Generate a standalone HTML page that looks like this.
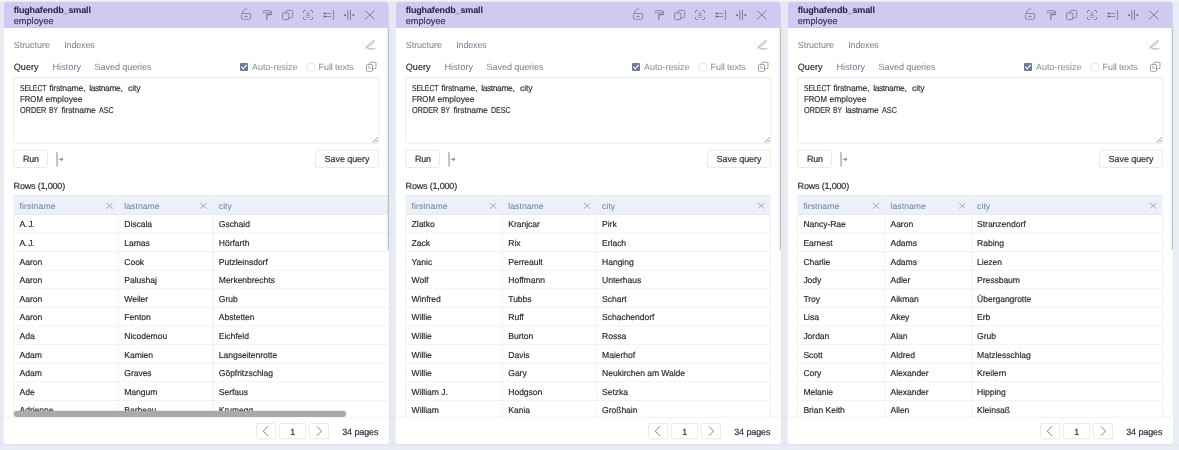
<!DOCTYPE html>
<html lang="en"><head><meta charset="utf-8"><title>Adminer</title><style>
html,body{margin:0;padding:0}
body{width:1179px;height:450px;overflow:hidden;background:#e5e9f2;font-family:"Liberation Sans",sans-serif;position:relative}
svg.l{position:absolute;left:0;top:0}
.tx{position:absolute;left:0;top:0;width:1179px;height:450px;overflow:hidden;will-change:transform}
.t{position:absolute;line-height:12px;white-space:nowrap;text-rendering:geometricPrecision;-webkit-text-stroke:0.18px}
</style></head><body>
<svg class="l" width="1179" height="450" viewBox="0 0 1179 450" fill="none">
<rect x="0" y="0" width="1179" height="1.6" fill="#f1f3f9"/>
<rect x="0" y="444" width="1179" height="6" fill="#e8ecf6"/>
<rect x="1173" y="1.6" width="6" height="442.4" fill="#e9edf6"/>
<path d="M0 444.9L1179 444.9" stroke="#e2e5ee" stroke-width="1.4"/>
<rect x="3.8" y="1.7" width="385" height="442.3" rx="4" fill="#fff"/>
<path d="M3.8 27.9V5.7a4 4 0 0 1 4-4H384.8a4 4 0 0 1 4 4V27.9Z" fill="#d0caf2"/>
<path d="M3.8 27.5L388.8 27.5" stroke="#c9c4e8" stroke-width="0.7"/>
<rect x="241.5" y="13.5" width="9.2" height="5.7" rx="1" fill="none" stroke="#7d77a6" stroke-width="0.85"/>
<path transform="translate(240 8)" d="M2.85 5.5V3.9C2.85 2.3 4.0 1.15 5.7 1.0L6.9 0.85" fill="none" stroke="#7d77a6" stroke-width="0.85" stroke-linecap="round" stroke-linejoin="round"/>
<path d="M244.7 16.4L247.3 16.4" stroke="#7d77a6" stroke-width="0.9" stroke-linecap="round"/>
<rect x="262.9" y="10.5" width="7.6" height="2.3" rx="0.9" fill="none" stroke="#7d77a6" stroke-width="0.85"/>
<path transform="translate(261 8)" d="M9.6 3.65H10.15V6.6H5.85V11.5" fill="none" stroke="#7d77a6" stroke-width="1.2" stroke-linecap="round" stroke-linejoin="round"/>
<path transform="translate(281 8)" d="M5.2 4.8V3.3C5.2 2.8 5.6 2.4 6.1 2.4H10.8C11.3 2.4 11.7 2.8 11.7 3.3V8.6C11.7 9.1 11.3 9.5 10.8 9.5H7.9" fill="none" stroke="#7d77a6" stroke-width="0.85" />
<rect x="282.5" y="13" width="6.4" height="6.6" rx="0.9" fill="none" stroke="#7d77a6" stroke-width="0.85"/>
<path transform="translate(0 0)" d="M303.5 12.8V11.1Q303.5 10.5 304.1 10.5H305.8 M310.3 10.5H312Q312.6 10.5 312.6 11.1V12.8 M312.6 17.2V18.9Q312.6 19.5 312 19.5H310.3 M305.8 19.5H304.1Q303.5 19.5 303.5 18.9V17.2" fill="none" stroke="#7d77a6" stroke-width="0.95" />
<circle cx="308.05" cy="13.6" r="1.15" fill="none" stroke="#7d77a6" stroke-width="0.8" opacity="0.7"/>
<ellipse cx="308.05" cy="16.5" rx="2.3" ry="1.25" fill="none" stroke="#7d77a6" stroke-width="0.8" opacity="0.7"/>
<path d="M324.6 13.4L331.2 13.4" stroke="#7d77a6" stroke-width="0.85"/>
<path d="M324.6 16.5L331.2 16.5" stroke="#7d77a6" stroke-width="0.85"/>
<path d="M333.4 10.3L333.4 19.7" stroke="#7d77a6" stroke-width="0.85" stroke-linecap="round"/>
<circle cx="324.6" cy="13.4" r="0.95" fill="#5d578c"/>
<circle cx="324.6" cy="16.5" r="0.95" fill="#5d578c"/>
<path d="M347.85 10.3L347.85 19.7" stroke="#7d77a6" stroke-width="1" stroke-linecap="round"/>
<path d="M350.45 10.3L350.45 19.7" stroke="#7d77a6" stroke-width="1" stroke-linecap="round"/>
<circle cx="345.1" cy="15.2" r="0.95" fill="#5d578c"/>
<circle cx="353.45" cy="15.2" r="0.95" fill="#5d578c"/>
<path transform="translate(0 0)" d="M365.3 10.5L374.3 19.2M374.3 10.5L365.3 19.2" fill="none" stroke="#746ea0" stroke-width="0.88" stroke-linecap="round" stroke-linejoin="round"/>
<path transform="translate(361 38)" d="M5.1 9.9L5.8 8.1L12.3 2.75Q12.9 2.35 13.35 2.9Q13.8 3.5 13.25 3.95L6.8 9.4Z" fill="none" stroke="#a3a3a8" stroke-width="0.85" stroke-linecap="round" stroke-linejoin="round"/>
<path d="M368.2 48.9L375 48.9" stroke="#a3a3a8" stroke-width="0.9" stroke-linecap="round"/>
<rect x="240" y="63" width="8" height="8" rx="1" fill="#6f7b96"/>
<path transform="translate(240 63)" d="M1.7 4.2L3.3 5.8L6.4 2.1" fill="none" stroke="#fff" stroke-width="1.1" stroke-linecap="round" stroke-linejoin="round"/>
<rect x="307.3" y="63.3" width="7.1" height="7.4" rx="1" fill="#fff" stroke="#dcdce0" stroke-width="0.67"/>
<path transform="translate(365 61)" d="M4.6 3.4V2.2C4.6 1.7 5 1.3 5.5 1.3H10.1C10.6 1.3 11 1.7 11 2.2V6.8C11 7.3 10.6 7.7 10.1 7.7H7.6" fill="none" stroke="#8e8e93" stroke-width="0.85" />
<rect x="366.5" y="64.5" width="6" height="6.8" rx="0.8" fill="none" stroke="#8e8e93" stroke-width="0.85"/>
<path transform="translate(365 61)" d="M3 7.2H6M3 5.6H4.6" fill="none" stroke="#8e8e93" stroke-width="0.7" />
<rect x="13.7" y="77.6" width="365" height="65.6" rx="1.5" fill="#fff" stroke="#e0e0e4" stroke-width="0.67"/>
<path transform="translate(371 135.8)" d="M1.5 6.8L6.8 1.5M4.3 6.8L6.8 4.3" fill="none" stroke="#6f6f6f" stroke-width="0.7" />
<rect x="13.7" y="150.2" width="33.8" height="17.3" rx="1.6" fill="#fff" stroke="#e0e0e4" stroke-width="0.67"/>
<rect x="56.2" y="152.2" width="1.6" height="14.3" fill="#b4b4b6"/>
<path transform="translate(58.6 156.8)" d="M0.6 2.5H4M2.8 1.1L4.3 2.5L2.8 3.9" fill="none" stroke="#555" stroke-width="0.7" stroke-linecap="round" stroke-linejoin="round"/>
<rect x="315.5" y="150.2" width="63.1" height="17.3" rx="1.6" fill="#fff" stroke="#e0e0e4" stroke-width="0.67"/>
<rect x="13.6" y="195.4" width="375.2" height="19.3" fill="#ecf0f8"/>
<path d="M13.6 195.5L388.8 195.5" stroke="#e5e8ee" stroke-width="0.9"/>
<path d="M13.6 214.2L388.8 214.2" stroke="#e5e8ee" stroke-width="0.9"/>
<path d="M13.6 233L388.8 233" stroke="#e9ebee" stroke-width="0.67"/>
<path d="M13.6 251.6L388.8 251.6" stroke="#e9ebee" stroke-width="0.67"/>
<path d="M13.6 270.2L388.8 270.2" stroke="#e9ebee" stroke-width="0.67"/>
<path d="M13.6 288.8L388.8 288.8" stroke="#e9ebee" stroke-width="0.67"/>
<path d="M13.6 307.4L388.8 307.4" stroke="#e9ebee" stroke-width="0.67"/>
<path d="M13.6 326L388.8 326" stroke="#e9ebee" stroke-width="0.67"/>
<path d="M13.6 344.6L388.8 344.6" stroke="#e9ebee" stroke-width="0.67"/>
<path d="M13.6 363.2L388.8 363.2" stroke="#e9ebee" stroke-width="0.67"/>
<path d="M13.6 381.8L388.8 381.8" stroke="#e9ebee" stroke-width="0.67"/>
<path d="M13.6 400.4L388.8 400.4" stroke="#e9ebee" stroke-width="0.67"/>
<path d="M13.6 214.4L13.6 417.2" stroke="#e9ebee" stroke-width="0.67"/>
<path d="M118.3 214.4L118.3 417.2" stroke="#e9ebee" stroke-width="0.67"/>
<path d="M213.3 214.4L213.3 417.2" stroke="#e9ebee" stroke-width="0.67"/>
<path d="M118.3 195.4L118.3 214.7" stroke="#f3f5fa" stroke-width="0.67"/>
<path d="M213.3 195.4L213.3 214.7" stroke="#f3f5fa" stroke-width="0.67"/>
<path transform="translate(106.2 202.9)" d="M0.4 0.4L6.1 5.4M6.1 0.4L0.4 5.4" fill="none" stroke="#868c98" stroke-width="0.7" stroke-linecap="round"/>
<path transform="translate(200.2 202.9)" d="M0.4 0.4L6.1 5.4M6.1 0.4L0.4 5.4" fill="none" stroke="#868c98" stroke-width="0.7" stroke-linecap="round"/>
<rect x="395.8" y="1.7" width="385" height="442.3" rx="4" fill="#fff"/>
<path d="M395.8 27.9V5.7a4 4 0 0 1 4-4H776.8a4 4 0 0 1 4 4V27.9Z" fill="#d0caf2"/>
<path d="M395.8 27.5L780.8 27.5" stroke="#c9c4e8" stroke-width="0.7"/>
<rect x="633.5" y="13.5" width="9.2" height="5.7" rx="1" fill="none" stroke="#7d77a6" stroke-width="0.85"/>
<path transform="translate(632 8)" d="M2.85 5.5V3.9C2.85 2.3 4.0 1.15 5.7 1.0L6.9 0.85" fill="none" stroke="#7d77a6" stroke-width="0.85" stroke-linecap="round" stroke-linejoin="round"/>
<path d="M636.7 16.4L639.3 16.4" stroke="#7d77a6" stroke-width="0.9" stroke-linecap="round"/>
<rect x="654.9" y="10.5" width="7.6" height="2.3" rx="0.9" fill="none" stroke="#7d77a6" stroke-width="0.85"/>
<path transform="translate(653 8)" d="M9.6 3.65H10.15V6.6H5.85V11.5" fill="none" stroke="#7d77a6" stroke-width="1.2" stroke-linecap="round" stroke-linejoin="round"/>
<path transform="translate(673 8)" d="M5.2 4.8V3.3C5.2 2.8 5.6 2.4 6.1 2.4H10.8C11.3 2.4 11.7 2.8 11.7 3.3V8.6C11.7 9.1 11.3 9.5 10.8 9.5H7.9" fill="none" stroke="#7d77a6" stroke-width="0.85" />
<rect x="674.5" y="13" width="6.4" height="6.6" rx="0.9" fill="none" stroke="#7d77a6" stroke-width="0.85"/>
<path transform="translate(0 0)" d="M695.5 12.8V11.1Q695.5 10.5 696.1 10.5H697.8 M702.3 10.5H704Q704.6 10.5 704.6 11.1V12.8 M704.6 17.2V18.9Q704.6 19.5 704 19.5H702.3 M697.8 19.5H696.1Q695.5 19.5 695.5 18.9V17.2" fill="none" stroke="#7d77a6" stroke-width="0.95" />
<circle cx="700.05" cy="13.6" r="1.15" fill="none" stroke="#7d77a6" stroke-width="0.8" opacity="0.7"/>
<ellipse cx="700.05" cy="16.5" rx="2.3" ry="1.25" fill="none" stroke="#7d77a6" stroke-width="0.8" opacity="0.7"/>
<path d="M716.6 13.4L723.2 13.4" stroke="#7d77a6" stroke-width="0.85"/>
<path d="M716.6 16.5L723.2 16.5" stroke="#7d77a6" stroke-width="0.85"/>
<path d="M725.4 10.3L725.4 19.7" stroke="#7d77a6" stroke-width="0.85" stroke-linecap="round"/>
<circle cx="716.6" cy="13.4" r="0.95" fill="#5d578c"/>
<circle cx="716.6" cy="16.5" r="0.95" fill="#5d578c"/>
<path d="M739.85 10.3L739.85 19.7" stroke="#7d77a6" stroke-width="1" stroke-linecap="round"/>
<path d="M742.45 10.3L742.45 19.7" stroke="#7d77a6" stroke-width="1" stroke-linecap="round"/>
<circle cx="737.1" cy="15.2" r="0.95" fill="#5d578c"/>
<circle cx="745.45" cy="15.2" r="0.95" fill="#5d578c"/>
<path transform="translate(0 0)" d="M757.3 10.5L766.3 19.2M766.3 10.5L757.3 19.2" fill="none" stroke="#746ea0" stroke-width="0.88" stroke-linecap="round" stroke-linejoin="round"/>
<path transform="translate(753 38)" d="M5.1 9.9L5.8 8.1L12.3 2.75Q12.9 2.35 13.35 2.9Q13.8 3.5 13.25 3.95L6.8 9.4Z" fill="none" stroke="#a3a3a8" stroke-width="0.85" stroke-linecap="round" stroke-linejoin="round"/>
<path d="M760.2 48.9L767 48.9" stroke="#a3a3a8" stroke-width="0.9" stroke-linecap="round"/>
<rect x="632" y="63" width="8" height="8" rx="1" fill="#6f7b96"/>
<path transform="translate(632 63)" d="M1.7 4.2L3.3 5.8L6.4 2.1" fill="none" stroke="#fff" stroke-width="1.1" stroke-linecap="round" stroke-linejoin="round"/>
<rect x="699.3" y="63.3" width="7.1" height="7.4" rx="1" fill="#fff" stroke="#dcdce0" stroke-width="0.67"/>
<path transform="translate(757 61)" d="M4.6 3.4V2.2C4.6 1.7 5 1.3 5.5 1.3H10.1C10.6 1.3 11 1.7 11 2.2V6.8C11 7.3 10.6 7.7 10.1 7.7H7.6" fill="none" stroke="#8e8e93" stroke-width="0.85" />
<rect x="758.5" y="64.5" width="6" height="6.8" rx="0.8" fill="none" stroke="#8e8e93" stroke-width="0.85"/>
<path transform="translate(757 61)" d="M3 7.2H6M3 5.6H4.6" fill="none" stroke="#8e8e93" stroke-width="0.7" />
<rect x="405.7" y="77.6" width="365" height="65.6" rx="1.5" fill="#fff" stroke="#e0e0e4" stroke-width="0.67"/>
<path transform="translate(763 135.8)" d="M1.5 6.8L6.8 1.5M4.3 6.8L6.8 4.3" fill="none" stroke="#6f6f6f" stroke-width="0.7" />
<rect x="405.7" y="150.2" width="33.8" height="17.3" rx="1.6" fill="#fff" stroke="#e0e0e4" stroke-width="0.67"/>
<rect x="448.2" y="152.2" width="1.6" height="14.3" fill="#b4b4b6"/>
<path transform="translate(450.6 156.8)" d="M0.6 2.5H4M2.8 1.1L4.3 2.5L2.8 3.9" fill="none" stroke="#555" stroke-width="0.7" stroke-linecap="round" stroke-linejoin="round"/>
<rect x="707.5" y="150.2" width="63.1" height="17.3" rx="1.6" fill="#fff" stroke="#e0e0e4" stroke-width="0.67"/>
<rect x="405.6" y="195.4" width="364.8" height="19.3" fill="#ecf0f8"/>
<path d="M405.6 195.5L770.4 195.5" stroke="#e5e8ee" stroke-width="0.9"/>
<path d="M405.6 214.2L770.4 214.2" stroke="#e5e8ee" stroke-width="0.9"/>
<path d="M405.6 233L770.4 233" stroke="#e9ebee" stroke-width="0.67"/>
<path d="M405.6 251.6L770.4 251.6" stroke="#e9ebee" stroke-width="0.67"/>
<path d="M405.6 270.2L770.4 270.2" stroke="#e9ebee" stroke-width="0.67"/>
<path d="M405.6 288.8L770.4 288.8" stroke="#e9ebee" stroke-width="0.67"/>
<path d="M405.6 307.4L770.4 307.4" stroke="#e9ebee" stroke-width="0.67"/>
<path d="M405.6 326L770.4 326" stroke="#e9ebee" stroke-width="0.67"/>
<path d="M405.6 344.6L770.4 344.6" stroke="#e9ebee" stroke-width="0.67"/>
<path d="M405.6 363.2L770.4 363.2" stroke="#e9ebee" stroke-width="0.67"/>
<path d="M405.6 381.8L770.4 381.8" stroke="#e9ebee" stroke-width="0.67"/>
<path d="M405.6 400.4L770.4 400.4" stroke="#e9ebee" stroke-width="0.67"/>
<path d="M405.6 214.4L405.6 417.2" stroke="#e9ebee" stroke-width="0.67"/>
<path d="M502.3 214.4L502.3 417.2" stroke="#e9ebee" stroke-width="0.67"/>
<path d="M596.6 214.4L596.6 417.2" stroke="#e9ebee" stroke-width="0.67"/>
<path d="M770.4 214.4L770.4 417.2" stroke="#e9ebee" stroke-width="0.67"/>
<path d="M502.3 195.4L502.3 214.7" stroke="#f3f5fa" stroke-width="0.67"/>
<path d="M596.6 195.4L596.6 214.7" stroke="#f3f5fa" stroke-width="0.67"/>
<path transform="translate(489.9 202.9)" d="M0.4 0.4L6.1 5.4M6.1 0.4L0.4 5.4" fill="none" stroke="#868c98" stroke-width="0.7" stroke-linecap="round"/>
<path transform="translate(583.9 202.9)" d="M0.4 0.4L6.1 5.4M6.1 0.4L0.4 5.4" fill="none" stroke="#868c98" stroke-width="0.7" stroke-linecap="round"/>
<path transform="translate(757.9 202.9)" d="M0.4 0.4L6.1 5.4M6.1 0.4L0.4 5.4" fill="none" stroke="#868c98" stroke-width="0.7" stroke-linecap="round"/>
<rect x="787.8" y="1.7" width="385" height="442.3" rx="4" fill="#fff"/>
<path d="M787.8 27.9V5.7a4 4 0 0 1 4-4H1168.8a4 4 0 0 1 4 4V27.9Z" fill="#d0caf2"/>
<path d="M787.8 27.5L1172.8 27.5" stroke="#c9c4e8" stroke-width="0.7"/>
<rect x="1025.5" y="13.5" width="9.2" height="5.7" rx="1" fill="none" stroke="#7d77a6" stroke-width="0.85"/>
<path transform="translate(1024 8)" d="M2.85 5.5V3.9C2.85 2.3 4.0 1.15 5.7 1.0L6.9 0.85" fill="none" stroke="#7d77a6" stroke-width="0.85" stroke-linecap="round" stroke-linejoin="round"/>
<path d="M1028.7 16.4L1031.3 16.4" stroke="#7d77a6" stroke-width="0.9" stroke-linecap="round"/>
<rect x="1046.9" y="10.5" width="7.6" height="2.3" rx="0.9" fill="none" stroke="#7d77a6" stroke-width="0.85"/>
<path transform="translate(1045 8)" d="M9.6 3.65H10.15V6.6H5.85V11.5" fill="none" stroke="#7d77a6" stroke-width="1.2" stroke-linecap="round" stroke-linejoin="round"/>
<path transform="translate(1065 8)" d="M5.2 4.8V3.3C5.2 2.8 5.6 2.4 6.1 2.4H10.8C11.3 2.4 11.7 2.8 11.7 3.3V8.6C11.7 9.1 11.3 9.5 10.8 9.5H7.9" fill="none" stroke="#7d77a6" stroke-width="0.85" />
<rect x="1066.5" y="13" width="6.4" height="6.6" rx="0.9" fill="none" stroke="#7d77a6" stroke-width="0.85"/>
<path transform="translate(0 0)" d="M1087.5 12.8V11.1Q1087.5 10.5 1088.1 10.5H1089.8 M1094.3 10.5H1096Q1096.6 10.5 1096.6 11.1V12.8 M1096.6 17.2V18.9Q1096.6 19.5 1096 19.5H1094.3 M1089.8 19.5H1088.1Q1087.5 19.5 1087.5 18.9V17.2" fill="none" stroke="#7d77a6" stroke-width="0.95" />
<circle cx="1092.05" cy="13.6" r="1.15" fill="none" stroke="#7d77a6" stroke-width="0.8" opacity="0.7"/>
<ellipse cx="1092.05" cy="16.5" rx="2.3" ry="1.25" fill="none" stroke="#7d77a6" stroke-width="0.8" opacity="0.7"/>
<path d="M1108.6 13.4L1115.2 13.4" stroke="#7d77a6" stroke-width="0.85"/>
<path d="M1108.6 16.5L1115.2 16.5" stroke="#7d77a6" stroke-width="0.85"/>
<path d="M1117.4 10.3L1117.4 19.7" stroke="#7d77a6" stroke-width="0.85" stroke-linecap="round"/>
<circle cx="1108.6" cy="13.4" r="0.95" fill="#5d578c"/>
<circle cx="1108.6" cy="16.5" r="0.95" fill="#5d578c"/>
<path d="M1131.85 10.3L1131.85 19.7" stroke="#7d77a6" stroke-width="1" stroke-linecap="round"/>
<path d="M1134.45 10.3L1134.45 19.7" stroke="#7d77a6" stroke-width="1" stroke-linecap="round"/>
<circle cx="1129.1" cy="15.2" r="0.95" fill="#5d578c"/>
<circle cx="1137.45" cy="15.2" r="0.95" fill="#5d578c"/>
<path transform="translate(0 0)" d="M1149.3 10.5L1158.3 19.2M1158.3 10.5L1149.3 19.2" fill="none" stroke="#746ea0" stroke-width="0.88" stroke-linecap="round" stroke-linejoin="round"/>
<path transform="translate(1145 38)" d="M5.1 9.9L5.8 8.1L12.3 2.75Q12.9 2.35 13.35 2.9Q13.8 3.5 13.25 3.95L6.8 9.4Z" fill="none" stroke="#a3a3a8" stroke-width="0.85" stroke-linecap="round" stroke-linejoin="round"/>
<path d="M1152.2 48.9L1159 48.9" stroke="#a3a3a8" stroke-width="0.9" stroke-linecap="round"/>
<rect x="1024" y="63" width="8" height="8" rx="1" fill="#6f7b96"/>
<path transform="translate(1024 63)" d="M1.7 4.2L3.3 5.8L6.4 2.1" fill="none" stroke="#fff" stroke-width="1.1" stroke-linecap="round" stroke-linejoin="round"/>
<rect x="1091.3" y="63.3" width="7.1" height="7.4" rx="1" fill="#fff" stroke="#dcdce0" stroke-width="0.67"/>
<path transform="translate(1149 61)" d="M4.6 3.4V2.2C4.6 1.7 5 1.3 5.5 1.3H10.1C10.6 1.3 11 1.7 11 2.2V6.8C11 7.3 10.6 7.7 10.1 7.7H7.6" fill="none" stroke="#8e8e93" stroke-width="0.85" />
<rect x="1150.5" y="64.5" width="6" height="6.8" rx="0.8" fill="none" stroke="#8e8e93" stroke-width="0.85"/>
<path transform="translate(1149 61)" d="M3 7.2H6M3 5.6H4.6" fill="none" stroke="#8e8e93" stroke-width="0.7" />
<rect x="797.7" y="77.6" width="365" height="65.6" rx="1.5" fill="#fff" stroke="#e0e0e4" stroke-width="0.67"/>
<path transform="translate(1155 135.8)" d="M1.5 6.8L6.8 1.5M4.3 6.8L6.8 4.3" fill="none" stroke="#6f6f6f" stroke-width="0.7" />
<rect x="797.7" y="150.2" width="33.8" height="17.3" rx="1.6" fill="#fff" stroke="#e0e0e4" stroke-width="0.67"/>
<rect x="840.2" y="152.2" width="1.6" height="14.3" fill="#b4b4b6"/>
<path transform="translate(842.6 156.8)" d="M0.6 2.5H4M2.8 1.1L4.3 2.5L2.8 3.9" fill="none" stroke="#555" stroke-width="0.7" stroke-linecap="round" stroke-linejoin="round"/>
<rect x="1099.5" y="150.2" width="63.1" height="17.3" rx="1.6" fill="#fff" stroke="#e0e0e4" stroke-width="0.67"/>
<rect x="797.4" y="195.4" width="365.2" height="19.3" fill="#ecf0f8"/>
<path d="M797.4 195.5L1162.6 195.5" stroke="#e5e8ee" stroke-width="0.9"/>
<path d="M797.4 214.2L1162.6 214.2" stroke="#e5e8ee" stroke-width="0.9"/>
<path d="M797.4 233L1162.6 233" stroke="#e9ebee" stroke-width="0.67"/>
<path d="M797.4 251.6L1162.6 251.6" stroke="#e9ebee" stroke-width="0.67"/>
<path d="M797.4 270.2L1162.6 270.2" stroke="#e9ebee" stroke-width="0.67"/>
<path d="M797.4 288.8L1162.6 288.8" stroke="#e9ebee" stroke-width="0.67"/>
<path d="M797.4 307.4L1162.6 307.4" stroke="#e9ebee" stroke-width="0.67"/>
<path d="M797.4 326L1162.6 326" stroke="#e9ebee" stroke-width="0.67"/>
<path d="M797.4 344.6L1162.6 344.6" stroke="#e9ebee" stroke-width="0.67"/>
<path d="M797.4 363.2L1162.6 363.2" stroke="#e9ebee" stroke-width="0.67"/>
<path d="M797.4 381.8L1162.6 381.8" stroke="#e9ebee" stroke-width="0.67"/>
<path d="M797.4 400.4L1162.6 400.4" stroke="#e9ebee" stroke-width="0.67"/>
<path d="M797.4 214.4L797.4 417.2" stroke="#e9ebee" stroke-width="0.67"/>
<path d="M884.5 214.4L884.5 417.2" stroke="#e9ebee" stroke-width="0.67"/>
<path d="M971.6 214.4L971.6 417.2" stroke="#e9ebee" stroke-width="0.67"/>
<path d="M1162.6 214.4L1162.6 417.2" stroke="#e9ebee" stroke-width="0.67"/>
<path d="M884.5 195.4L884.5 214.7" stroke="#f3f5fa" stroke-width="0.67"/>
<path d="M971.6 195.4L971.6 214.7" stroke="#f3f5fa" stroke-width="0.67"/>
<path transform="translate(872.6 202.9)" d="M0.4 0.4L6.1 5.4M6.1 0.4L0.4 5.4" fill="none" stroke="#868c98" stroke-width="0.7" stroke-linecap="round"/>
<path transform="translate(959.1 202.9)" d="M0.4 0.4L6.1 5.4M6.1 0.4L0.4 5.4" fill="none" stroke="#868c98" stroke-width="0.7" stroke-linecap="round"/>
<path transform="translate(1150 202.9)" d="M0.4 0.4L6.1 5.4M6.1 0.4L0.4 5.4" fill="none" stroke="#868c98" stroke-width="0.7" stroke-linecap="round"/>
</svg>
<div class="tx">
<div class="t" style="left:13.7px;top:4px;font-size:9px;color:#2a2744;font-weight:bold;-webkit-text-stroke:0.06px;letter-spacing:-0.142px;">flughafendb_small</div>
<div class="t" style="left:13.7px;top:15px;font-size:9.2px;color:#35334a;letter-spacing:0.013px;">employee</div>
<div class="t" style="left:13.7px;top:39px;font-size:9px;color:#7b8596;-webkit-text-stroke:0.06px;letter-spacing:-0.024px;">Structure</div>
<div class="t" style="left:64.2px;top:39px;font-size:9px;color:#7b8596;-webkit-text-stroke:0.06px;letter-spacing:-0.146px;">Indexes</div>
<div class="t" style="left:13.7px;top:61px;font-size:9.1px;color:#2f3034;letter-spacing:0.044px;">Query</div>
<div class="t" style="left:52.5px;top:61px;font-size:9.1px;color:#7b8596;-webkit-text-stroke:0.06px;letter-spacing:0.055px;">History</div>
<div class="t" style="left:94.6px;top:61px;font-size:9px;color:#7b8596;-webkit-text-stroke:0.06px;letter-spacing:-0.057px;">Saved queries</div>
<div class="t" style="left:252px;top:61px;font-size:9px;color:#8a919f;-webkit-text-stroke:0.06px;letter-spacing:0.007px;">Auto-resize</div>
<div class="t" style="left:318.6px;top:61px;font-size:9px;color:#8a919f;-webkit-text-stroke:0.06px;letter-spacing:-0.101px;">Full texts</div>
<div class="t" style="left:19.7px;top:82px;font-size:8.6px;color:#34353a;transform:scaleX(0.7921);transform-origin:0 0;">SELECT</div>
<div class="t" style="left:49.3px;top:82px;font-size:8.6px;color:#34353a;letter-spacing:-0.166px;">firstname,</div>
<div class="t" style="left:89.2px;top:82px;font-size:8.6px;color:#34353a;letter-spacing:-0.454px;">lastname,</div>
<div class="t" style="left:128px;top:82px;font-size:8.6px;color:#34353a;letter-spacing:-0.100px;">city</div>
<div class="t" style="left:19.7px;top:93px;font-size:8.6px;color:#34353a;transform:scaleX(0.9045);transform-origin:0 0;">FROM</div>
<div class="t" style="left:45.5px;top:93px;font-size:8.6px;color:#34353a;letter-spacing:-0.049px;">employee</div>
<div class="t" style="left:19.7px;top:104px;font-size:8.6px;color:#34353a;transform:scaleX(0.8500);transform-origin:0 0;">ORDER</div>
<div class="t" style="left:49.2px;top:104px;font-size:8.6px;color:#34353a;transform:scaleX(0.7845);transform-origin:0 0;">BY</div>
<div class="t" style="left:61.4px;top:104px;font-size:8.6px;color:#34353a;letter-spacing:-0.119px;">firstname</div>
<div class="t" style="left:99.4px;top:104px;font-size:8.6px;color:#34353a;transform:scaleX(0.8256);transform-origin:0 0;">ASC</div>
<div class="t" style="left:23.1px;top:153px;font-size:9px;color:#2c2d31;letter-spacing:-0.304px;">Run</div>
<div class="t" style="left:324.6px;top:153px;font-size:9px;color:#2c2d31;letter-spacing:-0.073px;">Save query</div>
<div class="t" style="left:13.6px;top:180px;font-size:9px;color:#2c2d31;letter-spacing:-0.177px;">Rows (1,000)</div>
<div class="t" style="left:19.6px;top:200px;font-size:8.6px;color:#78849a;-webkit-text-stroke:0.06px;letter-spacing:0.059px;">firstname</div>
<div class="t" style="left:124.3px;top:200px;font-size:8.6px;color:#78849a;-webkit-text-stroke:0.06px;letter-spacing:0.065px;">lastname</div>
<div class="t" style="left:218.8px;top:200px;font-size:8.6px;color:#78849a;-webkit-text-stroke:0.06px;letter-spacing:0.048px;">city</div>
<div class="t" style="left:19.6px;top:218px;font-size:8.6px;color:#2c2d31;letter-spacing:-0.581px;">A. J.</div>
<div class="t" style="left:124.3px;top:218px;font-size:8.6px;color:#2c2d31;letter-spacing:-0.060px;">Discala</div>
<div class="t" style="left:218.8px;top:218px;font-size:8.6px;color:#2c2d31;letter-spacing:-0.068px;">Gschaid</div>
<div class="t" style="left:19.6px;top:237px;font-size:8.6px;color:#2c2d31;letter-spacing:-0.581px;">A. J.</div>
<div class="t" style="left:124.3px;top:237px;font-size:8.6px;color:#2c2d31;letter-spacing:-0.077px;">Lamas</div>
<div class="t" style="left:218.8px;top:237px;font-size:8.6px;color:#2c2d31;letter-spacing:-0.058px;">Hörfarth</div>
<div class="t" style="left:19.6px;top:256px;font-size:8.6px;color:#2c2d31;letter-spacing:-0.069px;">Aaron</div>
<div class="t" style="left:124.3px;top:256px;font-size:8.6px;color:#2c2d31;letter-spacing:-0.075px;">Cook</div>
<div class="t" style="left:218.8px;top:256px;font-size:8.6px;color:#2c2d31;letter-spacing:-0.057px;">Putzleinsdorf</div>
<div class="t" style="left:19.6px;top:274px;font-size:8.6px;color:#2c2d31;letter-spacing:-0.069px;">Aaron</div>
<div class="t" style="left:124.3px;top:274px;font-size:8.6px;color:#2c2d31;letter-spacing:-0.062px;">Palushaj</div>
<div class="t" style="left:218.8px;top:274px;font-size:8.6px;color:#2c2d31;letter-spacing:-0.066px;">Merkenbrechts</div>
<div class="t" style="left:19.6px;top:293px;font-size:8.6px;color:#2c2d31;letter-spacing:-0.069px;">Aaron</div>
<div class="t" style="left:124.3px;top:293px;font-size:8.6px;color:#2c2d31;letter-spacing:-0.061px;">Weiler</div>
<div class="t" style="left:218.8px;top:293px;font-size:8.6px;color:#2c2d31;letter-spacing:-0.072px;">Grub</div>
<div class="t" style="left:19.6px;top:311px;font-size:8.6px;color:#2c2d31;letter-spacing:-0.069px;">Aaron</div>
<div class="t" style="left:124.3px;top:311px;font-size:8.6px;color:#2c2d31;letter-spacing:-0.067px;">Fenton</div>
<div class="t" style="left:218.8px;top:311px;font-size:8.6px;color:#2c2d31;letter-spacing:-0.061px;">Abstetten</div>
<div class="t" style="left:19.6px;top:330px;font-size:8.6px;color:#2c2d31;letter-spacing:-0.077px;">Ada</div>
<div class="t" style="left:124.3px;top:330px;font-size:8.6px;color:#2c2d31;letter-spacing:-0.073px;">Nicodemou</div>
<div class="t" style="left:218.8px;top:330px;font-size:8.6px;color:#2c2d31;letter-spacing:-0.057px;">Eichfeld</div>
<div class="t" style="left:19.6px;top:349px;font-size:8.6px;color:#2c2d31;letter-spacing:-0.084px;">Adam</div>
<div class="t" style="left:124.3px;top:349px;font-size:8.6px;color:#2c2d31;letter-spacing:-0.073px;">Kamien</div>
<div class="t" style="left:218.8px;top:349px;font-size:8.6px;color:#2c2d31;letter-spacing:-0.059px;">Langseitenrotte</div>
<div class="t" style="left:19.6px;top:367px;font-size:8.6px;color:#2c2d31;letter-spacing:-0.084px;">Adam</div>
<div class="t" style="left:124.3px;top:367px;font-size:8.6px;color:#2c2d31;letter-spacing:-0.069px;">Graves</div>
<div class="t" style="left:218.8px;top:367px;font-size:8.6px;color:#2c2d31;letter-spacing:-0.059px;">Göpfritzschlag</div>
<div class="t" style="left:19.6px;top:386px;font-size:8.6px;color:#2c2d31;letter-spacing:-0.077px;">Ade</div>
<div class="t" style="left:124.3px;top:386px;font-size:8.6px;color:#2c2d31;letter-spacing:-0.084px;">Mangum</div>
<div class="t" style="left:218.8px;top:386px;font-size:8.6px;color:#2c2d31;letter-spacing:-0.064px;">Serfaus</div>
<div class="t" style="left:19.6px;top:404px;font-size:8.6px;color:#2c2d31;letter-spacing:-0.065px;">Adrienne</div>
<div class="t" style="left:124.3px;top:404px;font-size:8.6px;color:#2c2d31;letter-spacing:-0.070px;">Barbeau</div>
<div class="t" style="left:218.8px;top:404px;font-size:8.6px;color:#2c2d31;letter-spacing:-0.075px;">Krumegg</div>
<div class="t" style="left:405.7px;top:4px;font-size:9px;color:#2a2744;font-weight:bold;-webkit-text-stroke:0.06px;letter-spacing:-0.142px;">flughafendb_small</div>
<div class="t" style="left:405.7px;top:15px;font-size:9.2px;color:#35334a;letter-spacing:0.013px;">employee</div>
<div class="t" style="left:405.7px;top:39px;font-size:9px;color:#7b8596;-webkit-text-stroke:0.06px;letter-spacing:-0.024px;">Structure</div>
<div class="t" style="left:456.2px;top:39px;font-size:9px;color:#7b8596;-webkit-text-stroke:0.06px;letter-spacing:-0.146px;">Indexes</div>
<div class="t" style="left:405.7px;top:61px;font-size:9.1px;color:#2f3034;letter-spacing:0.044px;">Query</div>
<div class="t" style="left:444.5px;top:61px;font-size:9.1px;color:#7b8596;-webkit-text-stroke:0.06px;letter-spacing:0.055px;">History</div>
<div class="t" style="left:486.6px;top:61px;font-size:9px;color:#7b8596;-webkit-text-stroke:0.06px;letter-spacing:-0.057px;">Saved queries</div>
<div class="t" style="left:644px;top:61px;font-size:9px;color:#8a919f;-webkit-text-stroke:0.06px;letter-spacing:0.007px;">Auto-resize</div>
<div class="t" style="left:710.6px;top:61px;font-size:9px;color:#8a919f;-webkit-text-stroke:0.06px;letter-spacing:-0.101px;">Full texts</div>
<div class="t" style="left:411.7px;top:82px;font-size:8.6px;color:#34353a;transform:scaleX(0.7921);transform-origin:0 0;">SELECT</div>
<div class="t" style="left:441.3px;top:82px;font-size:8.6px;color:#34353a;letter-spacing:-0.166px;">firstname,</div>
<div class="t" style="left:481.2px;top:82px;font-size:8.6px;color:#34353a;letter-spacing:-0.454px;">lastname,</div>
<div class="t" style="left:520px;top:82px;font-size:8.6px;color:#34353a;letter-spacing:-0.100px;">city</div>
<div class="t" style="left:411.7px;top:93px;font-size:8.6px;color:#34353a;transform:scaleX(0.9045);transform-origin:0 0;">FROM</div>
<div class="t" style="left:437.5px;top:93px;font-size:8.6px;color:#34353a;letter-spacing:-0.049px;">employee</div>
<div class="t" style="left:411.7px;top:104px;font-size:8.6px;color:#34353a;transform:scaleX(0.8500);transform-origin:0 0;">ORDER</div>
<div class="t" style="left:441.2px;top:104px;font-size:8.6px;color:#34353a;transform:scaleX(0.7845);transform-origin:0 0;">BY</div>
<div class="t" style="left:453.4px;top:104px;font-size:8.6px;color:#34353a;letter-spacing:-0.107px;">firstname</div>
<div class="t" style="left:491.3px;top:104px;font-size:8.6px;color:#34353a;transform:scaleX(0.8203);transform-origin:0 0;">DESC</div>
<div class="t" style="left:415.1px;top:153px;font-size:9px;color:#2c2d31;letter-spacing:-0.304px;">Run</div>
<div class="t" style="left:716.6px;top:153px;font-size:9px;color:#2c2d31;letter-spacing:-0.073px;">Save query</div>
<div class="t" style="left:405.6px;top:180px;font-size:9px;color:#2c2d31;letter-spacing:-0.177px;">Rows (1,000)</div>
<div class="t" style="left:411.6px;top:200px;font-size:8.6px;color:#78849a;-webkit-text-stroke:0.06px;letter-spacing:0.059px;">firstname</div>
<div class="t" style="left:508.3px;top:200px;font-size:8.6px;color:#78849a;-webkit-text-stroke:0.06px;letter-spacing:0.065px;">lastname</div>
<div class="t" style="left:602.1px;top:200px;font-size:8.6px;color:#78849a;-webkit-text-stroke:0.06px;letter-spacing:0.048px;">city</div>
<div class="t" style="left:411.6px;top:218px;font-size:8.6px;color:#2c2d31;letter-spacing:-0.059px;">Zlatko</div>
<div class="t" style="left:508.3px;top:218px;font-size:8.6px;color:#2c2d31;letter-spacing:-0.060px;">Kranjcar</div>
<div class="t" style="left:602.1px;top:218px;font-size:8.6px;color:#2c2d31;letter-spacing:-0.056px;">Pirk</div>
<div class="t" style="left:411.6px;top:237px;font-size:8.6px;color:#2c2d31;letter-spacing:-0.070px;">Zack</div>
<div class="t" style="left:508.3px;top:237px;font-size:8.6px;color:#2c2d31;letter-spacing:-0.062px;">Rix</div>
<div class="t" style="left:602.1px;top:237px;font-size:8.6px;color:#2c2d31;letter-spacing:-0.061px;">Erlach</div>
<div class="t" style="left:411.6px;top:256px;font-size:8.6px;color:#2c2d31;letter-spacing:-0.063px;">Yanic</div>
<div class="t" style="left:508.3px;top:256px;font-size:8.6px;color:#2c2d31;letter-spacing:-0.058px;">Perreault</div>
<div class="t" style="left:602.1px;top:256px;font-size:8.6px;color:#2c2d31;letter-spacing:-0.069px;">Hanging</div>
<div class="t" style="left:411.6px;top:274px;font-size:8.6px;color:#2c2d31;letter-spacing:-0.064px;">Wolf</div>
<div class="t" style="left:508.3px;top:274px;font-size:8.6px;color:#2c2d31;letter-spacing:-0.070px;">Hoffmann</div>
<div class="t" style="left:602.1px;top:274px;font-size:8.6px;color:#2c2d31;letter-spacing:-0.066px;">Unterhaus</div>
<div class="t" style="left:411.6px;top:293px;font-size:8.6px;color:#2c2d31;letter-spacing:-0.063px;">Winfred</div>
<div class="t" style="left:508.3px;top:293px;font-size:8.6px;color:#2c2d31;letter-spacing:-0.071px;">Tubbs</div>
<div class="t" style="left:602.1px;top:293px;font-size:8.6px;color:#2c2d31;letter-spacing:-0.062px;">Schart</div>
<div class="t" style="left:411.6px;top:311px;font-size:8.6px;color:#2c2d31;letter-spacing:-0.051px;">Willie</div>
<div class="t" style="left:508.3px;top:311px;font-size:8.6px;color:#2c2d31;letter-spacing:-0.059px;">Ruff</div>
<div class="t" style="left:602.1px;top:311px;font-size:8.6px;color:#2c2d31;letter-spacing:-0.066px;">Schachendorf</div>
<div class="t" style="left:411.6px;top:330px;font-size:8.6px;color:#2c2d31;letter-spacing:-0.051px;">Willie</div>
<div class="t" style="left:508.3px;top:330px;font-size:8.6px;color:#2c2d31;letter-spacing:-0.063px;">Burton</div>
<div class="t" style="left:602.1px;top:330px;font-size:8.6px;color:#2c2d31;letter-spacing:-0.073px;">Rossa</div>
<div class="t" style="left:411.6px;top:349px;font-size:8.6px;color:#2c2d31;letter-spacing:-0.051px;">Willie</div>
<div class="t" style="left:508.3px;top:349px;font-size:8.6px;color:#2c2d31;letter-spacing:-0.065px;">Davis</div>
<div class="t" style="left:602.1px;top:349px;font-size:8.6px;color:#2c2d31;letter-spacing:-0.063px;">Maierhof</div>
<div class="t" style="left:411.6px;top:367px;font-size:8.6px;color:#2c2d31;letter-spacing:-0.051px;">Willie</div>
<div class="t" style="left:508.3px;top:367px;font-size:8.6px;color:#2c2d31;letter-spacing:-0.070px;">Gary</div>
<div class="t" style="left:602.1px;top:367px;font-size:8.6px;color:#2c2d31;letter-spacing:-0.067px;">Neukirchen am Walde</div>
<div class="t" style="left:411.6px;top:386px;font-size:8.6px;color:#2c2d31;letter-spacing:-0.055px;">William J.</div>
<div class="t" style="left:508.3px;top:386px;font-size:8.6px;color:#2c2d31;letter-spacing:-0.074px;">Hodgson</div>
<div class="t" style="left:602.1px;top:386px;font-size:8.6px;color:#2c2d31;letter-spacing:-0.066px;">Setzka</div>
<div class="t" style="left:411.6px;top:404px;font-size:8.6px;color:#2c2d31;letter-spacing:-0.059px;">William</div>
<div class="t" style="left:508.3px;top:404px;font-size:8.6px;color:#2c2d31;letter-spacing:-0.066px;">Kania</div>
<div class="t" style="left:602.1px;top:404px;font-size:8.6px;color:#2c2d31;letter-spacing:-0.067px;">Großhain</div>
<div class="t" style="left:797.7px;top:4px;font-size:9px;color:#2a2744;font-weight:bold;-webkit-text-stroke:0.06px;letter-spacing:-0.142px;">flughafendb_small</div>
<div class="t" style="left:797.7px;top:15px;font-size:9.2px;color:#35334a;letter-spacing:0.013px;">employee</div>
<div class="t" style="left:797.7px;top:39px;font-size:9px;color:#7b8596;-webkit-text-stroke:0.06px;letter-spacing:-0.024px;">Structure</div>
<div class="t" style="left:848.2px;top:39px;font-size:9px;color:#7b8596;-webkit-text-stroke:0.06px;letter-spacing:-0.146px;">Indexes</div>
<div class="t" style="left:797.7px;top:61px;font-size:9.1px;color:#2f3034;letter-spacing:0.044px;">Query</div>
<div class="t" style="left:836.5px;top:61px;font-size:9.1px;color:#7b8596;-webkit-text-stroke:0.06px;letter-spacing:0.055px;">History</div>
<div class="t" style="left:878.6px;top:61px;font-size:9px;color:#7b8596;-webkit-text-stroke:0.06px;letter-spacing:-0.057px;">Saved queries</div>
<div class="t" style="left:1036px;top:61px;font-size:9px;color:#8a919f;-webkit-text-stroke:0.06px;letter-spacing:0.007px;">Auto-resize</div>
<div class="t" style="left:1102.6px;top:61px;font-size:9px;color:#8a919f;-webkit-text-stroke:0.06px;letter-spacing:-0.101px;">Full texts</div>
<div class="t" style="left:803.7px;top:82px;font-size:8.6px;color:#34353a;transform:scaleX(0.7921);transform-origin:0 0;">SELECT</div>
<div class="t" style="left:833.3px;top:82px;font-size:8.6px;color:#34353a;letter-spacing:-0.166px;">firstname,</div>
<div class="t" style="left:873.2px;top:82px;font-size:8.6px;color:#34353a;letter-spacing:-0.454px;">lastname,</div>
<div class="t" style="left:912px;top:82px;font-size:8.6px;color:#34353a;letter-spacing:-0.100px;">city</div>
<div class="t" style="left:803.7px;top:93px;font-size:8.6px;color:#34353a;transform:scaleX(0.9045);transform-origin:0 0;">FROM</div>
<div class="t" style="left:829.5px;top:93px;font-size:8.6px;color:#34353a;letter-spacing:-0.049px;">employee</div>
<div class="t" style="left:803.7px;top:104px;font-size:8.6px;color:#34353a;transform:scaleX(0.8500);transform-origin:0 0;">ORDER</div>
<div class="t" style="left:833.2px;top:104px;font-size:8.6px;color:#34353a;transform:scaleX(0.7845);transform-origin:0 0;">BY</div>
<div class="t" style="left:845.4px;top:104px;font-size:8.6px;color:#34353a;letter-spacing:-0.225px;">lastname</div>
<div class="t" style="left:881.7px;top:104px;font-size:8.6px;color:#34353a;transform:scaleX(0.8426);transform-origin:0 0;">ASC</div>
<div class="t" style="left:807.1px;top:153px;font-size:9px;color:#2c2d31;letter-spacing:-0.304px;">Run</div>
<div class="t" style="left:1108.6px;top:153px;font-size:9px;color:#2c2d31;letter-spacing:-0.073px;">Save query</div>
<div class="t" style="left:797.6px;top:180px;font-size:9px;color:#2c2d31;letter-spacing:-0.177px;">Rows (1,000)</div>
<div class="t" style="left:803.4px;top:200px;font-size:8.6px;color:#78849a;-webkit-text-stroke:0.06px;letter-spacing:0.059px;">firstname</div>
<div class="t" style="left:890.5px;top:200px;font-size:8.6px;color:#78849a;-webkit-text-stroke:0.06px;letter-spacing:0.065px;">lastname</div>
<div class="t" style="left:977.1px;top:200px;font-size:8.6px;color:#78849a;-webkit-text-stroke:0.06px;letter-spacing:0.048px;">city</div>
<div class="t" style="left:803.4px;top:218px;font-size:8.6px;color:#2c2d31;letter-spacing:-0.072px;">Nancy-Rae</div>
<div class="t" style="left:890.5px;top:218px;font-size:8.6px;color:#2c2d31;letter-spacing:-0.069px;">Aaron</div>
<div class="t" style="left:977.1px;top:218px;font-size:8.6px;color:#2c2d31;letter-spacing:-0.062px;">Stranzendorf</div>
<div class="t" style="left:803.4px;top:237px;font-size:8.6px;color:#2c2d31;letter-spacing:-0.064px;">Earnest</div>
<div class="t" style="left:890.5px;top:237px;font-size:8.6px;color:#2c2d31;letter-spacing:-0.080px;">Adams</div>
<div class="t" style="left:977.1px;top:237px;font-size:8.6px;color:#2c2d31;letter-spacing:-0.068px;">Rabing</div>
<div class="t" style="left:803.4px;top:256px;font-size:8.6px;color:#2c2d31;letter-spacing:-0.058px;">Charlie</div>
<div class="t" style="left:890.5px;top:256px;font-size:8.6px;color:#2c2d31;letter-spacing:-0.080px;">Adams</div>
<div class="t" style="left:977.1px;top:256px;font-size:8.6px;color:#2c2d31;letter-spacing:-0.063px;">Liezen</div>
<div class="t" style="left:803.4px;top:274px;font-size:8.6px;color:#2c2d31;letter-spacing:-0.068px;">Jody</div>
<div class="t" style="left:890.5px;top:274px;font-size:8.6px;color:#2c2d31;letter-spacing:-0.060px;">Adler</div>
<div class="t" style="left:977.1px;top:274px;font-size:8.6px;color:#2c2d31;letter-spacing:-0.072px;">Pressbaum</div>
<div class="t" style="left:803.4px;top:293px;font-size:8.6px;color:#2c2d31;letter-spacing:-0.063px;">Troy</div>
<div class="t" style="left:890.5px;top:293px;font-size:8.6px;color:#2c2d31;letter-spacing:-0.072px;">Aikman</div>
<div class="t" style="left:977.1px;top:293px;font-size:8.6px;color:#2c2d31;letter-spacing:-0.063px;">Übergangrotte</div>
<div class="t" style="left:803.4px;top:311px;font-size:8.6px;color:#2c2d31;letter-spacing:-0.059px;">Lisa</div>
<div class="t" style="left:890.5px;top:311px;font-size:8.6px;color:#2c2d31;letter-spacing:-0.072px;">Akey</div>
<div class="t" style="left:977.1px;top:311px;font-size:8.6px;color:#2c2d31;letter-spacing:-0.067px;">Erb</div>
<div class="t" style="left:803.4px;top:330px;font-size:8.6px;color:#2c2d31;letter-spacing:-0.066px;">Jordan</div>
<div class="t" style="left:890.5px;top:330px;font-size:8.6px;color:#2c2d31;letter-spacing:-0.065px;">Alan</div>
<div class="t" style="left:977.1px;top:330px;font-size:8.6px;color:#2c2d31;letter-spacing:-0.072px;">Grub</div>
<div class="t" style="left:803.4px;top:349px;font-size:8.6px;color:#2c2d31;letter-spacing:-0.059px;">Scott</div>
<div class="t" style="left:890.5px;top:349px;font-size:8.6px;color:#2c2d31;letter-spacing:-0.062px;">Aldred</div>
<div class="t" style="left:977.1px;top:349px;font-size:8.6px;color:#2c2d31;letter-spacing:-0.063px;">Matzlesschlag</div>
<div class="t" style="left:803.4px;top:367px;font-size:8.6px;color:#2c2d31;letter-spacing:-0.068px;">Cory</div>
<div class="t" style="left:890.5px;top:367px;font-size:8.6px;color:#2c2d31;letter-spacing:-0.065px;">Alexander</div>
<div class="t" style="left:977.1px;top:367px;font-size:8.6px;color:#2c2d31;letter-spacing:-0.056px;">Kreilern</div>
<div class="t" style="left:803.4px;top:386px;font-size:8.6px;color:#2c2d31;letter-spacing:-0.065px;">Melanie</div>
<div class="t" style="left:890.5px;top:386px;font-size:8.6px;color:#2c2d31;letter-spacing:-0.065px;">Alexander</div>
<div class="t" style="left:977.1px;top:386px;font-size:8.6px;color:#2c2d31;letter-spacing:-0.062px;">Hipping</div>
<div class="t" style="left:803.4px;top:404px;font-size:8.6px;color:#2c2d31;letter-spacing:-0.057px;">Brian Keith</div>
<div class="t" style="left:890.5px;top:404px;font-size:8.6px;color:#2c2d31;letter-spacing:-0.057px;">Allen</div>
<div class="t" style="left:977.1px;top:404px;font-size:8.6px;color:#2c2d31;letter-spacing:-0.063px;">Kleinsaß</div>
</div>
<svg class="l" width="1179" height="450" viewBox="0 0 1179 450" fill="none">
<path d="M3.8 417.3H388.8V440a4 4 0 0 1 -4 4H7.8a4 4 0 0 1 -4 -4Z" fill="#fff"/><path d="M3.8 417.3H388.8" stroke="#e9e9ec" stroke-width="0.67"/><rect x="13.7" y="410.7" width="332.5" height="6.2" rx="3.1" fill="#aaaaaa"/><rect x="256.7" y="423.3" width="18.8" height="15.5" rx="1.6" fill="#fff" stroke="#e0e0e4" stroke-width="0.67"/><path transform="translate(262.4 426.1)" d="M5.3 0.5L0.9 5L5.3 9.5" fill="none" stroke="#5a5a5e" stroke-width="0.75" stroke-linecap="round" stroke-linejoin="round"/><rect x="279.3" y="423.3" width="26" height="15.5" rx="1.6" fill="#fff" stroke="#e0e0e4" stroke-width="0.67"/><rect x="309.6" y="423.3" width="19" height="15.5" rx="1.6" fill="#fff" stroke="#e0e0e4" stroke-width="0.67"/><path transform="translate(315.9 426.1)" d="M1.2 0.5L5.6 5L1.2 9.5" fill="none" stroke="#5a5a5e" stroke-width="0.75" stroke-linecap="round" stroke-linejoin="round"/><rect x="387.7" y="27.9" width="1.3" height="221.9" rx="0" fill="#bcc0c9"/>
<path d="M395.8 417.3H780.8V440a4 4 0 0 1 -4 4H399.8a4 4 0 0 1 -4 -4Z" fill="#fff"/><path d="M395.8 417.3H780.8" stroke="#e9e9ec" stroke-width="0.67"/><rect x="648.7" y="423.3" width="18.8" height="15.5" rx="1.6" fill="#fff" stroke="#e0e0e4" stroke-width="0.67"/><path transform="translate(654.4 426.1)" d="M5.3 0.5L0.9 5L5.3 9.5" fill="none" stroke="#5a5a5e" stroke-width="0.75" stroke-linecap="round" stroke-linejoin="round"/><rect x="671.3" y="423.3" width="26" height="15.5" rx="1.6" fill="#fff" stroke="#e0e0e4" stroke-width="0.67"/><rect x="701.6" y="423.3" width="19" height="15.5" rx="1.6" fill="#fff" stroke="#e0e0e4" stroke-width="0.67"/><path transform="translate(707.9 426.1)" d="M1.2 0.5L5.6 5L1.2 9.5" fill="none" stroke="#5a5a5e" stroke-width="0.75" stroke-linecap="round" stroke-linejoin="round"/><rect x="779.7" y="27.9" width="1.3" height="221.9" rx="0" fill="#bcc0c9"/>
<path d="M787.8 417.3H1172.8V440a4 4 0 0 1 -4 4H791.8a4 4 0 0 1 -4 -4Z" fill="#fff"/><path d="M787.8 417.3H1172.8" stroke="#e9e9ec" stroke-width="0.67"/><rect x="1040.7" y="423.3" width="18.8" height="15.5" rx="1.6" fill="#fff" stroke="#e0e0e4" stroke-width="0.67"/><path transform="translate(1046.4 426.1)" d="M5.3 0.5L0.9 5L5.3 9.5" fill="none" stroke="#5a5a5e" stroke-width="0.75" stroke-linecap="round" stroke-linejoin="round"/><rect x="1063.3" y="423.3" width="26" height="15.5" rx="1.6" fill="#fff" stroke="#e0e0e4" stroke-width="0.67"/><rect x="1093.6" y="423.3" width="19" height="15.5" rx="1.6" fill="#fff" stroke="#e0e0e4" stroke-width="0.67"/><path transform="translate(1099.9 426.1)" d="M1.2 0.5L5.6 5L1.2 9.5" fill="none" stroke="#5a5a5e" stroke-width="0.75" stroke-linecap="round" stroke-linejoin="round"/><rect x="1171.7" y="27.9" width="1.3" height="221.9" rx="0" fill="#bcc0c9"/>
</svg>
<div class="tx">
<div class="t" style="left:290.3px;top:426px;font-size:8.8px;color:#2c2d31;">1</div>
<div class="t" style="left:342.2px;top:426px;font-size:9px;color:#2c2d31;letter-spacing:-0.104px;">34 pages</div>
<div class="t" style="left:682.3px;top:426px;font-size:8.8px;color:#2c2d31;">1</div>
<div class="t" style="left:734.2px;top:426px;font-size:9px;color:#2c2d31;letter-spacing:-0.104px;">34 pages</div>
<div class="t" style="left:1074.3px;top:426px;font-size:8.8px;color:#2c2d31;">1</div>
<div class="t" style="left:1126.2px;top:426px;font-size:9px;color:#2c2d31;letter-spacing:-0.104px;">34 pages</div>
</div>
</body></html>
